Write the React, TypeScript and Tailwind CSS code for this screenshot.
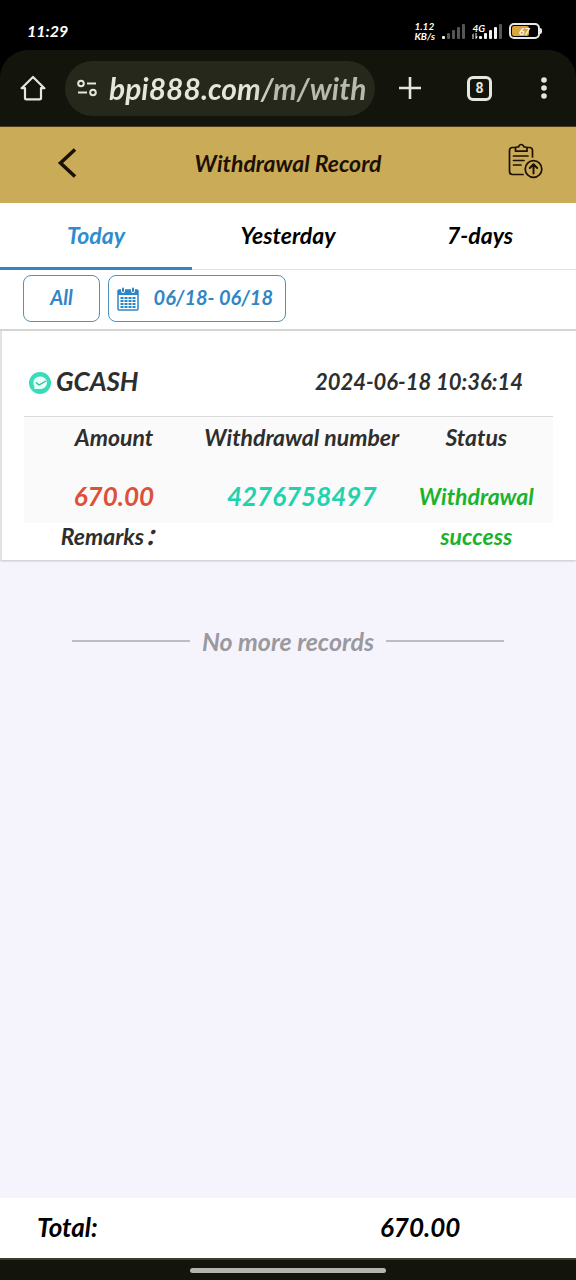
import React, { useState } from 'react';
import { clsx } from 'clsx';

const TABS = ['Today', 'Yesterday', '7-days'];

const RECORD = {
  method: 'GCASH',
  createdAt: '2024-06-18 10:36:14',
  amount: '670.00',
  number: '4276758497',
  status: 'Withdrawal success',
};

function SignalBars({ active, className }: { active: number; className?: string }) {
  return (
    <svg viewBox="0 0 24 16" className={className} aria-hidden="true">
      {[3, 6, 9, 12, 15].map((h, i) => (
        <rect
          key={h}
          x={i * 5}
          y={16 - h}
          width="3"
          height={h}
          rx="1"
          fill={i < active ? '#f2f2f2' : '#555555'}
        />
      ))}
    </svg>
  );
}

function StatusBar() {
  return (
    <div className="flex h-[50px] items-center justify-between pt-3 pr-[34px] pl-[27px] text-white">
      <span className="text-base font-bold">11:29</span>
      <div className="flex items-center">
        <div className="w-7 text-[10px] leading-[10px] font-bold">
          <div>1.12</div>
          <div>KB/s</div>
        </div>
        <SignalBars active={1} className="h-4 w-6" />
        <div className="ml-1.5 flex flex-col">
          <span className="text-[10px] leading-[10px] font-bold">4G</span>
          <svg viewBox="0 0 6 6" className="size-1.5" fill="#f2f2f2" aria-hidden="true">
            <path d="M1.5 0v6H.5V2.500H0zM3.500 0h1v3.500H6L4 6h-.5z" />
          </svg>
        </div>
        <SignalBars active={4} className="-ml-1.5 h-4 w-6" />
        {/* Battery */}
        <div className="ml-1.5 flex items-center">
          <div className="relative flex h-4 w-[31px] items-center justify-center rounded-[5px] border-2 border-[#e8e8e8]">
            <div className="absolute inset-y-px left-px w-[17px] rounded-[2px] bg-[#d9a43a]" />
            <span className="relative text-[10px] leading-3 font-bold">67</span>
          </div>
          <div className="h-1.5 w-0.5 rounded-r bg-[#e8e8e8]" />
        </div>
      </div>
    </div>
  );
}

function BrowserBar() {
  return (
    <div className="flex h-[77px] items-center rounded-t-[28px] border-b border-[#4a3a1c] bg-[#13140c] pr-[22px] pl-5 text-[#e6e6dc]">
      <button type="button" aria-label="Home" className="mr-[19px]">
        <svg viewBox="0 0 26 26" className="size-[26px]" fill="none" stroke="currentColor" strokeWidth="2.2" strokeLinejoin="round" aria-hidden="true">
          <path d="M1.6 13.2 13 2l11.4 11.2H21V23q0 1.4-1.4 1.4H6.4Q5 24.4 5 23v-9.8z" />
        </svg>
      </button>
      <div className="flex h-[55px] min-w-0 flex-1 items-center rounded-full bg-[#26281b] pr-2.5 pl-3">
        <svg viewBox="0 0 20 18" className="mr-3 h-[18px] w-5 shrink-0" fill="none" stroke="currentColor" strokeWidth="2" aria-hidden="true">
          <circle cx="4" cy="4.5" r="2.8" />
          <path d="M10 4.5h9M1 13.5h9" />
          <circle cx="16" cy="13.5" r="2.8" />
        </svg>
        <input
          type="text"
          aria-label="Address"
          readOnly
          value="bpi888.com/m/with"
          className="w-full min-w-0 bg-linear-to-r from-[#e6e6dc] from-55% to-[#b9baad] to-65% bg-clip-text text-[30px] leading-10 font-bold text-transparent italic outline-none"
        />
      </div>
      <button type="button" aria-label="New tab" className="ml-6">
        <svg viewBox="0 0 22 22" className="size-[22px]" stroke="currentColor" strokeWidth="2.6" aria-hidden="true">
          <path d="M11 0v22M0 11h22" />
        </svg>
      </button>
      <button
        type="button"
        aria-label="Open tabs"
        className="ml-[46px] flex size-[25px] items-center justify-center rounded-md border-[3px] border-current font-[Roboto] text-sm leading-none font-bold not-italic"
      >
        8
      </button>
      <button type="button" aria-label="Menu" className="ml-[42px]">
        <svg viewBox="0 0 20 22" className="h-[22px] w-5" fill="currentColor" aria-hidden="true">
          <circle cx="10" cy="3" r="2.8" />
          <circle cx="10" cy="11" r="2.8" />
          <circle cx="10" cy="19" r="2.8" />
        </svg>
      </button>
    </div>
  );
}

function PageHeader() {
  return (
    <header className="grid h-[76px] grid-cols-[1fr_auto_1fr] items-center bg-[#caab58] pr-[33px] pb-1 pl-[33px] text-[#1d1104]">
      <button type="button" aria-label="Back" className="justify-self-start pl-6">
        <svg viewBox="0 0 20 30" className="h-[30px] w-5" fill="none" stroke="currentColor" strokeWidth="3.6" aria-hidden="true">
          <path d="M18 1.5 3.5 15 18 28.5" />
        </svg>
      </button>
      <h1 className="text-[23px] font-bold">Withdrawal Record</h1>
      <button type="button" aria-label="Withdrawal slips" className="justify-self-end pb-1">
        <svg viewBox="0 0 36 36" className="size-9" fill="none" stroke="currentColor" strokeWidth="1.7" strokeLinecap="round" strokeLinejoin="round" aria-hidden="true">
          <path d="M8.5 4.5h-3q-3 0-3 3v21q0 3 3 3H16M20 4.5h2.5q3 0 3 3V14" />
          <path d="M8.5 8.2V5.5Q8.5 4 10 4h1.5q.8-2.500 2.700-2.500T17 4h1.500Q20 4 20 5.500v2.700z" />
          <path d="M6.5 13H21M6.5 17.5H17M6.5 22H14" />
          <circle cx="26.5" cy="26" r="8.3" />
          <path d="M26.5 30.5v-9M22.8 25l3.7-3.8 3.7 3.8" strokeWidth="2" />
        </svg>
      </button>
    </header>
  );
}

function CalendarIcon() {
  return (
    <svg viewBox="0 0 22 24" className="h-6 w-[22px] shrink-0" aria-hidden="true">
      <path d="M2 3h18q1 0 1 1v18q0 1-1 1H2q-1 0-1-1V4q0-1 1-1z" fill="none" stroke="#2b86c8" strokeWidth="1.5" />
      <path d="M1 3h20v5H1z" fill="#2b86c8" />
      <path d="M6 1v3M16 1v3" stroke="#ffffff" strokeWidth="4" strokeLinecap="round" />
      <path d="M6 1.5v2.500M16 1.500V4" stroke="#2b86c8" strokeWidth="2" strokeLinecap="round" />
      {[10, 13, 16, 19].map((y) =>
        [3, 7, 11, 15].map((x) => (
          <rect key={`${x}-${y}`} x={x + 0.5} y={y} width="3" height="2" fill="#2b86c8" />
        )),
      )}
    </svg>
  );
}

function RecordCard() {
  return (
    <section className="border-l-2 border-[#e2e2e2] bg-white pr-[23px] pb-[3px] pl-[22px] text-[#2e2e2e] shadow-[0_1px_2px_#c4c4c8]">
      <div className="flex h-[86px] items-center justify-between border-b border-[#dadada] pt-4 pr-[30px] pl-1">
        <div className="flex items-center gap-1">
          <svg viewBox="0 0 24 24" className="size-6" aria-hidden="true">
            <circle cx="12" cy="13" r="11" fill="#39dcba" />
            <path d="M12 6.500c4 0 7 2.600 7 6.200S16 19 12 19H6q1-1.500.2-3C3.800 11.500 7 6.500 12 6.500z" fill="#e6fff7" />
            <path d="m8 12.500 3 2.500 7-4" fill="none" stroke="#2fbf9c" strokeWidth="1.4" />
          </svg>
          <h2 className="text-[26px] font-bold">{RECORD.method}</h2>
        </div>
        <time className="text-[22px] font-bold">{RECORD.createdAt}</time>
      </div>

      <table className="w-full table-fixed border-collapse text-center text-[23px] font-bold">
        <thead>
          <tr className="leading-10">
            <th className="w-[34%] bg-[#fafafa]">Amount</th>
            <th className="w-[37%] bg-[#fafafa] whitespace-nowrap">Withdrawal number</th>
            <th className="w-[29%] bg-[#fafafa]">Status</th>
          </tr>
        </thead>
        <tbody>
          <tr className="leading-10">
            <td className="bg-[#fafafa] pt-[19px] pb-[7px] text-[26px] leading-10 text-[#dd5138]">{RECORD.amount}</td>
            <td className="bg-[#fafafa] pt-[19px] pb-[7px] text-[26px] leading-10 text-[#20d3ae]">{RECORD.number}</td>
            {/* status wraps past the tinted rows */}
            <td
              rowSpan={2}
              className="bg-linear-to-b from-[#fafafa] from-[66px] to-white to-[66px] pt-[19px] align-top text-[#1cb32c]"
            >
              {RECORD.status}
            </td>
          </tr>
          <tr>
            <td className="h-[34px] align-top leading-[26px]">
              Remarks：
            </td>
            <td />
          </tr>
        </tbody>
      </table>
    </section>
  );
}

export default function App() {
  const [tab, setTab] = useState('Today');

  return (
    <div className="flex min-h-screen flex-col bg-black font-[Lato,'Noto_Sans_CJK_SC',sans-serif] italic">
      <StatusBar />
      <BrowserBar />
      <PageHeader />

      <main className="flex flex-1 flex-col bg-[#f5f4fd]">
        <nav className="grid grid-cols-3 bg-white">
          {TABS.map((name) => (
            <button
              key={name}
              type="button"
              onClick={() => setTab(name)}
              className={clsx(
                'h-[67px] text-[23px] font-bold',
                tab === name
                  ? 'border-b-[3px] border-[#2f86c6] text-[#2f8ccf]'
                  : 'border-b border-[#e2e2e6] pb-0.5 text-black',
              )}
            >
              {name}
            </button>
          ))}
        </nav>

        <div className="flex gap-2 border-b-2 border-[#d6d6d6] bg-white pt-[5px] pb-[7px] pl-[23px] text-[#2f86c6]">
          <button type="button" className="h-[47px] w-[77px] rounded-lg border border-[#4f93bd] pb-1 text-xl font-bold">
            All
          </button>
          <button
            type="button"
            className="flex h-[47px] w-[178px] items-center justify-between rounded-lg border border-[#4f93bd] pr-3 pl-2 text-xl font-bold whitespace-nowrap"
          >
            <CalendarIcon />
            <span className="pb-1">06/18- 06/18</span>
          </button>
        </div>

        <RecordCard />

        <div className="flex items-center gap-3 px-[72px] pt-[63px]">
          <hr className="flex-1 border-t-2 border-[#bcbcc2]" />
          <p className="text-[25px] leading-9 font-bold text-[#9a9a9e]">No more records</p>
          <hr className="flex-1 border-t-2 border-[#bcbcc2]" />
        </div>
      </main>

      <footer className="grid h-[60px] grid-cols-2 items-center bg-white px-[37px] pb-0.5 text-[26px] font-bold text-black">
        <span>Total:</span>
        <span className="pl-[92px]">670.00</span>
      </footer>
      <div className="flex h-[22px] items-center justify-center border-t-2 border-[#3b3b2e] bg-[#13140c]">
        <div className="h-[5px] w-[34%] rounded-full bg-[#b4b5ad]" />
      </div>
    </div>
  );
}
